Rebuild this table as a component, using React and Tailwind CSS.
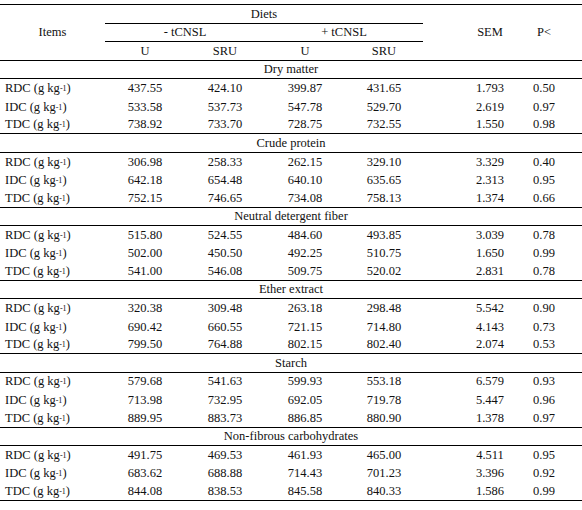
const sections = [
  {
    title: 'Dry matter',
    rows: [
      ['RDC', '437.55', '424.10', '399.87', '431.65', '1.793', '0.50'],
      ['IDC', '533.58', '537.73', '547.78', '529.70', '2.619', '0.97'],
      ['TDC', '738.92', '733.70', '728.75', '732.55', '1.550', '0.98'],
    ],
  },
  {
    title: 'Crude protein',
    rows: [
      ['RDC', '306.98', '258.33', '262.15', '329.10', '3.329', '0.40'],
      ['IDC', '642.18', '654.48', '640.10', '635.65', '2.313', '0.95'],
      ['TDC', '752.15', '746.65', '734.08', '758.13', '1.374', '0.66'],
    ],
  },
  {
    title: 'Neutral detergent fiber',
    rows: [
      ['RDC', '515.80', '524.55', '484.60', '493.85', '3.039', '0.78'],
      ['IDC', '502.00', '450.50', '492.25', '510.75', '1.650', '0.99'],
      ['TDC', '541.00', '546.08', '509.75', '520.02', '2.831', '0.78'],
    ],
  },
  {
    title: 'Ether extract',
    rows: [
      ['RDC', '320.38', '309.48', '263.18', '298.48', '5.542', '0.90'],
      ['IDC', '690.42', '660.55', '721.15', '714.80', '4.143', '0.73'],
      ['TDC', '799.50', '764.88', '802.15', '802.40', '2.074', '0.53'],
    ],
  },
  {
    title: 'Starch',
    rows: [
      ['RDC', '579.68', '541.63', '599.93', '553.18', '6.579', '0.93'],
      ['IDC', '713.98', '732.95', '692.05', '719.78', '5.447', '0.96'],
      ['TDC', '889.95', '883.73', '886.85', '880.90', '1.378', '0.97'],
    ],
  },
  {
    title: 'Non-fibrous carbohydrates',
    rows: [
      ['RDC', '491.75', '469.53', '461.93', '465.00', '4.511', '0.95'],
      ['IDC', '683.62', '688.88', '714.43', '701.23', '3.396', '0.92'],
      ['TDC', '844.08', '838.53', '845.58', '840.33', '1.586', '0.99'],
    ],
  },
];

const cols = 'grid grid-cols-[105px_80px_80px_80px_78px_100px_1fr]';

function Unit() {
  return (
    <span>
      {' '}(g kg<sup className="text-[8px] relative -top-[1px]">-1</sup>)
    </span>
  );
}

function DataRow({ row, last }) {
  const [name, a, b, c, d, sem, p] = row;
  return (
    <div className={`${cols} h-[18.33px] items-center ${last ? 'border-b border-black' : ''}`}>
      <div className="pl-[5px] whitespace-nowrap">
        {name}
        <Unit />
      </div>
      <div className="text-center">{a}</div>
      <div className="text-center">{b}</div>
      <div className="text-center">{c}</div>
      <div className="text-center">{d}</div>
      <div className="text-center pl-[34px]">{sem}</div>
      <div className="text-center pr-[17px]">{p}</div>
    </div>
  );
}

export default function App() {
  return (
    <div className="w-[582px] h-[510px] bg-white pt-[4px] text-[12.5px] leading-none text-[#111] font-[family-name:'Liberation_Serif',serif]">
      {/* header */}
      <div className={`${cols} grid-rows-[18.5px_18px_18.5px] border-y border-black`}>
        <div className="row-span-3 flex items-center justify-center">Items</div>
        <div className="col-span-4 flex items-center justify-center border-b border-black">Diets</div>
        <div className="row-span-3 flex items-center justify-center pl-[34px]">SEM</div>
        <div className="row-span-3 flex items-center justify-center pr-[17px]">P&lt;</div>
        <div className="col-span-2 flex items-center justify-center border-b border-black">- tCNSL</div>
        <div className="col-span-2 flex items-center justify-center border-b border-black">+ tCNSL</div>
        <div className="flex items-center justify-center">U</div>
        <div className="flex items-center justify-center">SRU</div>
        <div className="flex items-center justify-center">U</div>
        <div className="flex items-center justify-center">SRU</div>
      </div>

      {sections.map((s) => (
        <div key={s.title}>
          <div className="h-[18.33px] flex items-center justify-center border-b border-black">{s.title}</div>
          {s.rows.map((r, i) => (
            <DataRow key={r[0]} row={r} last={i === s.rows.length - 1} />
          ))}
        </div>
      ))}
    </div>
  );
}
